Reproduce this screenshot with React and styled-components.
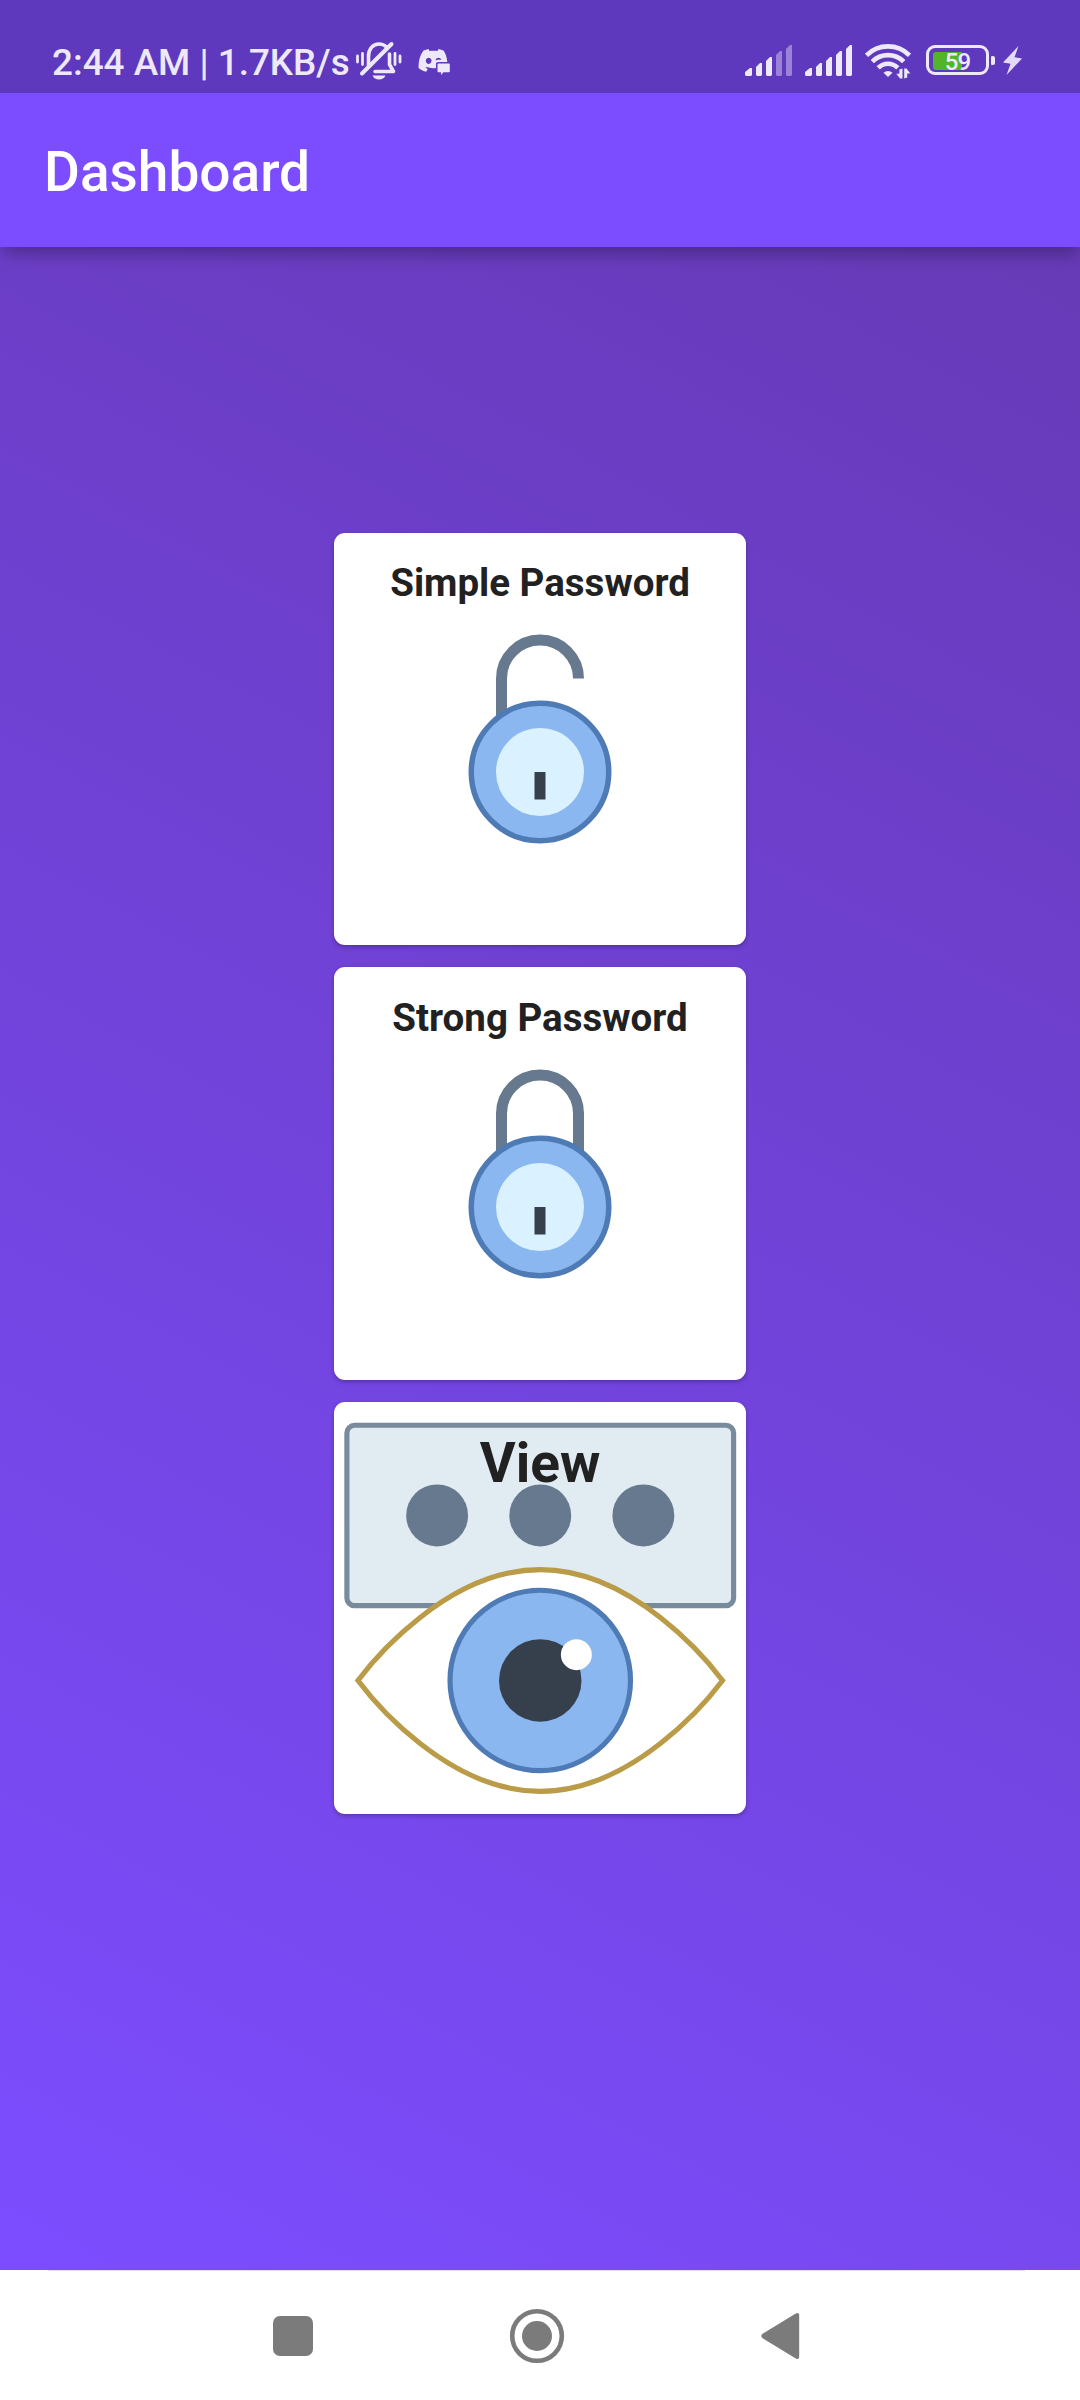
import React from 'react';
import styled, { createGlobalStyle } from 'styled-components';

const GlobalStyle = createGlobalStyle`
  body { margin: 0; background: #fff; font-family: Roboto, "Liberation Sans", sans-serif; }
`;

const Screen = styled.div`
  width: 1080px;
  height: 2400px;
  display: flex;
  flex-direction: column;
  overflow: hidden;
`;

const StatusBar = styled.header`
  height: 93px;
  box-sizing: border-box;
  flex: none;
  display: flex;
  align-items: flex-start;
  justify-content: space-between;
  background: #5e39bd;
  color: #eee8fb;
  padding: 38px 58px 0 52px;
  z-index: 2;
`;

const StatusGroup = styled.div`
  display: flex;
  align-items: flex-start;
`;

const Clock = styled.span`
  margin-top: 1px;
  font-size: 36.85px;
  font-weight: 500;
  line-height: 48px;
  white-space: nowrap;
  width: 300px;
`;

const Icon = styled.svg`
  display: block;
  flex: none;
  overflow: visible;
`;

const AppBar = styled.div`
  height: 154px;
  box-sizing: border-box;
  flex: none;
  display: flex;
  align-items: center;
  padding: 3px 0 0 44px;
  background: #7c4dff;
  color: #fff;
  box-shadow: 0 10px 16px -3px rgba(0, 0, 0, 0.29);
  z-index: 1;
`;

const Title = styled.h1`
  margin: 0;
  font-size: 55px;
  font-weight: 500;
  line-height: 64px;
`;

const Body = styled.main`
  height: 2023px;
  box-sizing: border-box;
  flex: none;
  display: flex;
  flex-direction: column;
  align-items: center;
  gap: 22px;
  padding-top: 285.75px;
  background: linear-gradient(208.1deg, #673ab7, #7c4dff);
`;

const Card = styled.section`
  width: 412.5px;
  height: 412.5px;
  flex: none;
  box-sizing: border-box;
  display: grid;
  justify-items: center;
  align-items: start;
  border-radius: 11px;
  background: #fff;
  overflow: hidden;
  box-shadow: 0 2px 4px rgba(0, 0, 0, 0.26);
`;

const CardTitle = styled.h2`
  grid-area: 1 / 1;
  margin: ${(p) => (p.$large ? '29px' : '27.5px')} 0 0;
  font-size: ${(p) => (p.$large ? 55 : 38.5)}px;
  line-height: ${(p) => (p.$large ? 64 : 45)}px;
  font-weight: 700;
  color: #212121;
  z-index: 1;
`;

const CardArt = styled(Icon)`
  grid-area: 1 / 1;
  margin-top: ${(p) => p.$top}px;
`;

const Divider = styled.div`
  height: 1px;
  flex: none;
  margin: 0 55px 0 48px;
  background: #e4dcf6;
`;

const NavBar = styled.nav`
  height: 129px;
  flex: none;
  display: flex;
  justify-content: center;
  align-items: center;
  gap: 184px;
  background: #fff;
  padding-right: 6px;
  box-sizing: border-box;
`;

function Muted() {
  return (
    <Icon width="46" height="40" viewBox="0 0 46 40" fill="none" stroke="#eee8fb">
      <path d="M1.500 14v6M6.500 11.500v11M44 14v6M39 11.500v11" strokeWidth="2.800" strokeLinecap="round" />
      <path d="M12.500 24V14.500C12.500 7 17 2 23 2c3 0 5.500 1 7.500 3M33.500 12v10.500l4 7H19" strokeWidth="3.600" strokeLinejoin="round" strokeLinecap="round" />
      <path d="M6 31.500L35.500 2" strokeWidth="4" strokeLinecap="round" />
      <path d="M16.500 33.500h13c-1 2.600-3.500 4-6.500 4s-5.500-1.400-6.500-4z" fill="#eee8fb" stroke="none" />
    </Icon>
  );
}

function Discord() {
  return (
    <Icon width="32" height="28" viewBox="0 0 32 28">
      <path
        fill="#eee8fb"
        fillRule="evenodd"
        d="M10.500 1L5.500 2.500C2.200 7 .4 12.500.6 20c2 1.900 4.600 3.200 7.600 3.700l1.600-2.600-2.200-1.300.9-.7c2.900 1 6 1.300 9.500.9V16c0-1.300.8-2.100 2-2.100h9.300C28.800 9 27.500 5 25.500 2.500L20.500 1l-1 2c-2.500-.4-5.200-.4-8 0zM10.600 9.700a2.900 3.100 0 1 0 .1 0zM20.500 9.700c-1.700 0-2.900 1.300-2.900 2.900 1-.8 1.700-.9 2.700-.9h3c-.5-1.200-1.500-2-2.800-2z"
      />
      <path fill="#eee8fb" d="M20.500 15.500h10.300a1 1 0 0 1 1 1v6.800a1 1 0 0 1-1 1h-5.300L23 27v-2.700h-2.500a1 1 0 0 1-1-1v-6.800a1 1 0 0 1 1-1z" />
    </Icon>
  );
}

const BARS = [8, 13, 19, 25, 31];

function Signal({ active }) {
  return (
    <Icon width="48" height="31" viewBox="0 0 48 31" fill="#eee8fb">
      {BARS.map((h, i) => {
        const x = i === 0 ? 0 : 1 + i * 10;
        const w = i === 0 ? 7 : 6;
        return (
          <path
            key={h}
            opacity={i < active ? 1 : 0.42}
            d={`M${x} ${31 - h + 4}L${x + w - 2} ${31 - h}H${x + w}V30L${x + w - 1} 31H${x + 1}L${x} 30Z`}
          />
        );
      })}
    </Icon>
  );
}

function Wifi() {
  return (
    <Icon width="46" height="36" viewBox="0 0 46 36" fill="none" stroke="#eee8fb" strokeWidth="4.600">
      <path d="M1.500 12.300a30.400 30.400 0 0 1 43 0" />
      <path d="M7.300 18.600a22.200 22.200 0 0 1 31.400 0" />
      <path d="M13.200 24.800a13.900 13.900 0 0 1 19.600 0" />
      <path d="M18.500 29.800a6.400 6.400 0 0 1 9 0L23 34z" fill="#eee8fb" stroke="none" />
      <path d="M37.500 25.500V35.500H35L31.300 30.800H34.400V26.500ZM39.200 35.500V25.500H41.500L45.300 30.500H42.200V34.500Z" fill="#eee8fb" stroke="none" />
    </Icon>
  );
}

const BatteryRow = styled.div`
  display: flex;
  align-items: center;
  gap: 2px;
  margin: 7px 8px 0 15px;
`;

const BatteryShell = styled.div`
  width: 63px;
  height: 30px;
  box-sizing: border-box;
  border: 3px solid #eee8fb;
  border-radius: 9px;
  display: grid;
  align-items: center;
  justify-items: center;
`;

const BatteryFill = styled.div`
  grid-area: 1 / 1;
  justify-self: start;
  width: 29px;
  height: 18px;
  margin-left: 4px;
  border-radius: 3px 0 0 3px;
  background: #54b427;
`;

const BatteryText = styled.span`
  grid-area: 1 / 1;
  margin-top: 2px;
  font-size: 24px;
  line-height: 24px;
  letter-spacing: -1px;
  font-weight: 500;
`;

const BatteryTip = styled.div`
  width: 4px;
  height: 9px;
  border-radius: 1px 2px 2px 1px;
  background: #eee8fb;
`;

function Battery() {
  return (
    <BatteryRow>
      <BatteryShell>
        <BatteryFill />
        <BatteryText>59</BatteryText>
      </BatteryShell>
      <BatteryTip />
    </BatteryRow>
  );
}

const Spaced = styled.div`
  margin: ${(p) => p.$m};
`;

function Lock({ open }) {
  return (
    <CardArt $top={96.25} width="220" height="220" viewBox="0 0 40 40">
      <path
        d={open ? 'M13 24V9a7 7 0 0 1 14 0' : 'M13 24V9a7 7 0 0 1 14 0V24'}
        fill="none"
        stroke="#66798f"
        strokeWidth="2"
      />
      <circle cx="20" cy="26" r="12.500" fill="#8bb7f0" stroke="#4e7ab5" />
      <circle cx="20" cy="26" r="8" fill="#daf2ff" />
      <rect x="19" y="26" width="2" height="5" fill="#36404d" />
    </CardArt>
  );
}

function Eye() {
  return (
    <CardArt $top={0} width="412.5" height="412.5" viewBox="0 0 80 80">
      <rect x="2.500" y="4.500" width="75" height="35" rx="1.500" fill="#e0ebf2" stroke="#788b9c" />
      <g fill="#66798f">
        <circle cx="20" cy="22" r="6" />
        <circle cx="40" cy="22" r="6" />
        <circle cx="60" cy="22" r="6" />
      </g>
      <path
        d="M4.650 54C7.500 50.200 22 32.500 40 32.500S72.500 50.200 75.350 54C72.500 57.800 58 75.500 40 75.500S7.500 57.800 4.650 54Z"
        fill="#fff"
        stroke="#ba9b48"
      />
      <circle cx="40" cy="54" r="17.500" fill="#8bb7f0" stroke="#4e7ab5" />
      <circle cx="40" cy="54" r="8" fill="#36404d" />
      <circle cx="47" cy="49" r="3" fill="#fff" />
    </CardArt>
  );
}

export default function App() {
  return (
    <Screen>
      <GlobalStyle />
      <StatusBar>
        <StatusGroup>
          <Clock>2:44 AM | 1.7KB/s</Clock>
          <Spaced $m="4px 0 0 4px"><Muted /></Spaced>
          <Spaced $m="10px 0 0 16px"><Discord /></Spaced>
        </StatusGroup>
        <StatusGroup>
          <Spaced $m="7px 12px 0 0"><Signal active={3} /></Spaced>
          <Spaced $m="7px 12px 0 0"><Signal active={5} /></Spaced>
          <Spaced $m="5px 0 0 0"><Wifi /></Spaced>
          <Battery />
          <Spaced $m="8px 0 0 0">
            <Icon width="19" height="29" viewBox="0 0 19 29">
              <path d="M15.500 0L0 16.500l7.500 1.200L3.500 29 19 12.500l-7.500-1.200z" fill="#e3daf8" />
            </Icon>
          </Spaced>
        </StatusGroup>
      </StatusBar>
      <AppBar>
        <Title>Dashboard</Title>
      </AppBar>
      <Body>
        <Card>
          <CardTitle>Simple Password</CardTitle>
          <Lock open />
        </Card>
        <Card>
          <CardTitle>Strong Password</CardTitle>
          <Lock />
        </Card>
        <Card>
          <CardTitle $large>View</CardTitle>
          <Eye />
        </Card>
      </Body>
      <Divider />
      <NavBar>
        <Icon width="60" height="60" viewBox="0 0 60 60" fill="#7b7b7b">
          <rect x="10" y="10" width="40" height="40" rx="7" />
        </Icon>
        <Icon width="60" height="60" viewBox="0 0 60 60" fill="#7b7b7b">
          <circle cx="30" cy="30" r="24.800" fill="none" stroke="#7b7b7b" strokeWidth="4.600" />
          <circle cx="30" cy="30" r="15" />
        </Icon>
        <Icon width="60" height="60" viewBox="0 0 60 60" fill="#7b7b7b">
          <path d="M11.600 27.800L44.800 7.600Q48.200 5.800 48.200 9.500V50.500Q48.200 54.200 44.800 52.400L11.600 32.200Q9 30 11.600 27.800Z" />
        </Icon>
      </NavBar>
    </Screen>
  );
}
